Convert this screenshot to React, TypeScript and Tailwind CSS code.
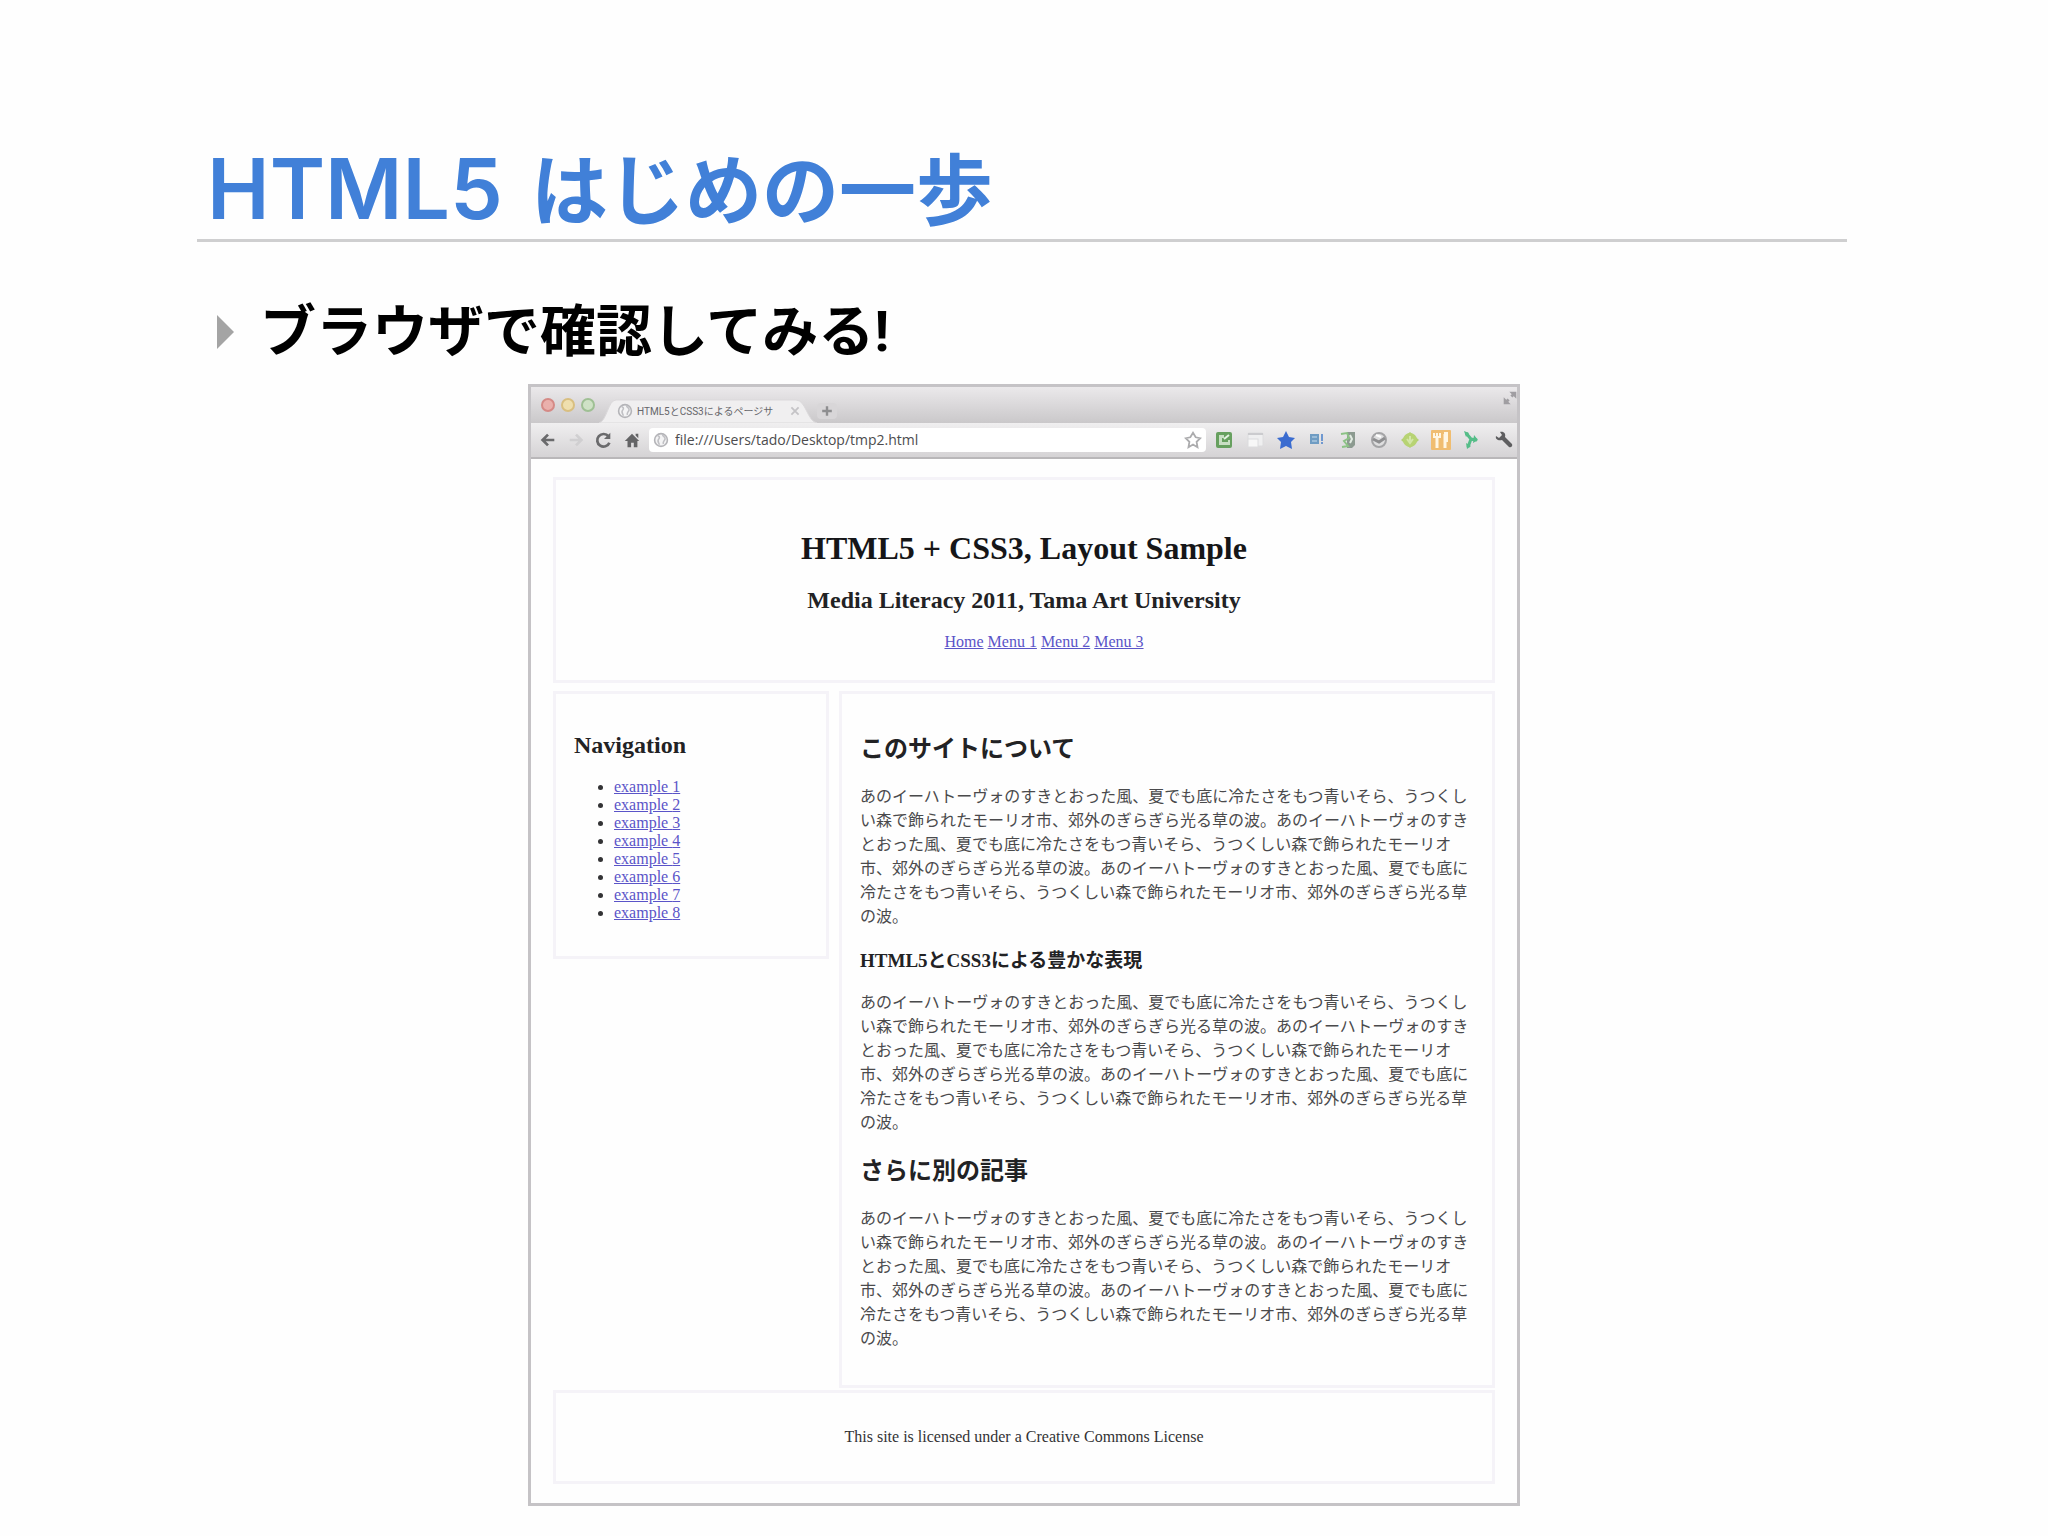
import type { ReactNode } from "react";

const STORY =
  "あのイーハトーヴォのすきとおった風、夏でも底に冷たさをもつ青いそら、うつくしい森で飾られたモーリオ市、郊外のぎらぎら光る草の波。";
const BODY_TEXT = STORY.repeat(3);

const MENU = ["Home", "Menu 1", "Menu 2", "Menu 3"];
const EXAMPLES = [1, 2, 3, 4, 5, 6, 7, 8];

function Icon({ children, size = 20 }: { children: ReactNode; size?: number }) {
  return (
    <svg width={size} height={size} viewBox="0 0 20 20" fill="none" aria-hidden="true" className="shrink-0">
      {children}
    </svg>
  );
}

function Globe() {
  return (
    <Icon size={16}>
      <circle cx="10" cy="10" r="8" fill="#f4f4f5" stroke="#b4b4b8" strokeWidth="2" />
      <path d="M5 4c3 1 4 3 2 5s0 4 1 7M12 3c0 3 4 3 3 6s-3 2-2 6" stroke="#c0c0c4" strokeWidth="2" />
    </Icon>
  );
}

const NAV_BUTTONS = [
  { label: "Back", icon: <path d="M17 10H4M10 4l-6 6 6 6" stroke="#6a6a6c" strokeWidth="3" /> },
  { label: "Forward", icon: <path d="M3 10h13M10 4l6 6-6 6" stroke="#d0cfd1" strokeWidth="3" /> },
  {
    label: "Reload",
    icon: (
      <>
        <path d="M15 6a7 7 0 1 0 1 7" stroke="#6a6a6c" strokeWidth="3" />
        <path d="M17 2v7h-7z" fill="#6a6a6c" />
      </>
    ),
  },
  {
    label: "Home",
    icon: <path d="M10 3l8 8h-2v7h-4v-5H9v5H5v-7H2zM14 3h3v5l-3-3z" fill="#646466" />,
  },
];

const EXTENSIONS = [
  {
    label: "Share",
    icon: (
      <>
        <rect x="2" y="2" width="16" height="16" rx="2" fill="#67a05f" />
        <path d="M5 5h5v3H8v4h6v-2h2v5H5z" fill="#c9dfc4" />
        <path d="M10 9l5-4" stroke="#e6f2e3" strokeWidth="2" />
      </>
    ),
  },
  {
    label: "Windows",
    icon: (
      <>
        <rect x="3" y="3" width="15" height="13" rx="1" fill="#efeff0" stroke="#dcdcde" />
        <path d="M3 4h15" stroke="#cbcbce" strokeWidth="2" />
        <rect x="3" y="9" width="10" height="8" fill="#f7f7f7" stroke="#dcdcde" />
      </>
    ),
  },
  {
    label: "Favorites",
    icon: <path d="M10 1l3 6 6 1-4 4 1 7-6-3-6 3 1-7-4-4 6-1z" fill="#3b6cd0" />,
  },
  {
    label: "Bookmark",
    icon: (
      <>
        <rect x="3" y="4" width="9" height="10" fill="#6f9cc3" />
        <path d="M5 7h5M5 11h5" stroke="#c8dcec" strokeWidth="1" />
        <path d="M15 4v7M15 12v2" stroke="#6f98d0" strokeWidth="2" />
      </>
    ),
  },
  {
    label: "Notes",
    icon: (
      <>
        <path d="M9 2h8v13l-3 3H9z" fill="#8c9a90" />
        <path d="M3 4l6-1 2 5-5 3 4 5-6 1" stroke="#8cc285" strokeWidth="2" />
        <path d="M12 5l2 4-2 4" stroke="#e2ebe2" strokeWidth="2" />
      </>
    ),
  },
  {
    label: "Block",
    icon: (
      <>
        <circle cx="10" cy="10" r="7" fill="#dededf" stroke="#a4a4a6" strokeWidth="2" />
        <path d="M4 9l6 3 6-4" stroke="#8e8e90" strokeWidth="3" />
        <path d="M7 5l5 2" stroke="#fff" strokeWidth="2" />
      </>
    ),
  },
  {
    label: "Feed",
    icon: (
      <>
        <path d="M10 2l9 8-9 8-9-8z" fill="#b3cf74" />
        <circle cx="10" cy="10" r="7" fill="#b7d373" />
        <path d="M10 6v5M7 9l3 4 3-4" stroke="#d3e6a8" strokeWidth="2" />
      </>
    ),
  },
  {
    label: "Tools",
    icon: (
      <>
        <rect x="0" y="0" width="20" height="20" rx="1" fill="#f0bd70" />
        <path d="M6 8v10M14 4v14" stroke="#fff6e2" strokeWidth="3" />
        <path d="M3 3v4h6V3M6 3v4M13 3h3v9" stroke="#fff6e2" strokeWidth="2" />
      </>
    ),
  },
  {
    label: "Branch",
    icon: (
      <>
        <path d="M4 3l5 6 6 1M9 9l-3 8" stroke="#55bd88" strokeWidth="3" />
        <path d="M2 1l5 2-3 4zM12 5l4 5-5 3zM4 13l5 3-4 3z" fill="#55bd88" />
      </>
    ),
  },
  {
    label: "Settings",
    icon: (
      <path
        d="M3 6l3 2 3-3-2-3c4-1 6 2 5 5l7 7c1 2-1 4-3 3l-7-7c-4 1-7-1-6-4z"
        fill="#5e5e60"
      />
    ),
  },
];

function TabStrip() {
  return (
    <div className="flex h-[36px] items-end bg-gradient-to-b from-[#ebe9eb] to-[#cac8ca] pl-[10px]">
      <div className="flex gap-[6px] self-center">
        <span className="h-[14px] w-[14px] rounded-full border-2 border-[#d58a86] bg-[#eab0ac]" />
        <span className="h-[14px] w-[14px] rounded-full border-2 border-[#d9bf80] bg-[#efdfae]" />
        <span className="h-[14px] w-[14px] rounded-full border-2 border-[#9fc094] bg-[#cfe2c6]" />
      </div>
      <div className="relative ml-1 h-[24px] w-[218px]">
        <svg viewBox="0 0 218 24" className="absolute inset-0 h-full w-full" aria-hidden="true">
          <path d="M0 24C8 22 9 1 17 1H197C207 1 208 22 218 24Z" fill="#f0eff0" stroke="#dbd9db" />
        </svg>
        <div className="relative flex h-full items-center gap-1 pl-[18px] pr-4 text-[#66666a]">
          <Globe />
          <span className="flex-1 whitespace-nowrap text-[10px]">HTML5とCSS3によるページサ</span>
          <button type="button" aria-label="Close tab" className="text-[#c4c3c6]">
            <Icon size={12}>
              <path d="M4 4l12 12M16 4L4 16" stroke="currentColor" strokeWidth="3" />
            </Icon>
          </button>
        </div>
      </div>
      <button type="button" aria-label="New tab" className="mb-1 flex h-4 w-5 items-center justify-center rounded bg-[#d8d6d8]">
        <Icon size={12}>
          <path d="M10 2v16M2 10h16" stroke="#8e8e90" strokeWidth="4" />
        </Icon>
      </button>
      <button type="button" aria-label="Full screen" className="ml-auto self-start py-1">
        <Icon size={14}>
          <path d="M9 1h10v10zM1 9v10h10z" fill="#a09ea2" />
          <path d="M12 8l4-4M4 16l4-4" stroke="#a09ea2" strokeWidth="4" />
        </Icon>
      </button>
    </div>
  );
}

function Toolbar() {
  return (
    <div className="flex h-[36px] items-center border-b-2 border-[#b9b7b9] bg-gradient-to-b from-[#f0eff0] to-[#d5d3d5] px-1">
      <div className="flex gap-[10px] pl-1">
        {NAV_BUTTONS.map((b) => (
          <button key={b.label} type="button" aria-label={b.label}>
            <Icon size={18}>{b.icon}</Icon>
          </button>
        ))}
      </div>
      <div className="mx-2 flex h-[24px] min-w-0 flex-1 items-center gap-[6px] rounded-sm bg-white px-1">
        <Globe />
        <input
          aria-label="Address"
          defaultValue="file:///Users/tado/Desktop/tmp2.html"
          className="min-w-0 flex-1 bg-transparent font-['Open_Sans',sans-serif] text-sm text-[#4c4c4e] outline-none"
        />
        <button type="button" aria-label="Bookmark this page">
          <Icon size={18}>
            <path d="M10 2l3 5 5 1-4 4 1 6-5-3-5 3 1-6-4-4 5-1z" stroke="#acacae" strokeWidth="2" />
          </Icon>
        </button>
      </div>
      <div className="flex gap-[11px]">
        {EXTENSIONS.map((e) => (
          <button key={e.label} type="button" aria-label={e.label}>
            <Icon>{e.icon}</Icon>
          </button>
        ))}
      </div>
    </div>
  );
}

function SamplePage() {
  return (
    <div className="bg-[#fefefe] px-[22px] pb-[19px] pt-[18px] font-['Liberation_Serif','Noto_Sans_CJK_JP',serif] text-base text-[#333335]">
      <header className="border-3 border-[#f5f3f8] pb-7 pt-[46px] text-center">
        <h1 className="text-[32px] font-bold leading-[44px] text-[#161618]">HTML5 + CSS3, Layout Sample</h1>
        <h2 className="mt-[14px] text-2xl font-bold text-[#222224]">Media Literacy 2011, Tama Art University</h2>
        <nav className="mt-4 flex justify-center gap-1 pl-10 leading-[20px]">
          {MENU.map((m) => (
            <a key={m} href="#" className="text-[#5a54c8] underline">{m}</a>
          ))}
        </nav>
      </header>

      <div className="mt-[8px] flex items-start gap-[10px]">
        <aside className="w-[276px] shrink-0 border-3 border-[#f5f3f8] px-[18px] pb-[34px] pt-[35px]">
          <h2 className="text-2xl font-bold text-[#222224]">Navigation</h2>
          <ul className="mt-[17px] list-disc pl-[40px] leading-[18px]">
            {EXAMPLES.map((n) => (
              <li key={n}>
                <a href="#" className="text-[#5a54c8] underline">example {n}</a>
              </li>
            ))}
          </ul>
        </aside>
        <main className="min-w-0 flex-1 border-3 border-[#f5f3f8] px-[18px] pb-[34px] pt-[39px]">
          <article>
            <h2 className="text-2xl font-bold leading-[32px] text-[#222224]">このサイトについて</h2>
            <p className="mt-5 leading-[24px] text-[#4a4a4c]">{BODY_TEXT}</p>
            <h3 className="mt-[18px] text-[19px] font-bold leading-[28px] text-[#222224]">HTML5とCSS3による豊かな表現</h3>
            <p className="mt-4 leading-[24px] text-[#4a4a4c]">{BODY_TEXT}</p>
          </article>
          <article className="mt-5">
            <h2 className="text-2xl font-bold leading-[32px] text-[#222224]">さらに別の記事</h2>
            <p className="mt-5 leading-[24px] text-[#4a4a4c]">{BODY_TEXT}</p>
          </article>
        </main>
      </div>

      <footer className="mt-[2px] border-3 border-[#f5f3f8] py-[32px] text-center">
        This site is licensed under a Creative Commons License
      </footer>
    </div>
  );
}

export default function App() {
  return (
    <div className="min-h-screen bg-[#fefefe] px-[197px] pb-8 pt-[143px] font-['Roboto','Noto_Sans_CJK_JP',sans-serif]" lang="ja">
      <h1 className="mr-1 flex items-baseline gap-[28px] border-b-3 border-[#cfcfd0] pl-[10px] leading-[92px] text-[#4180d8]">
        <span className="font-['Inter',sans-serif] text-[84px] font-semibold">HTML5</span>
        <span className="text-[77px] font-bold">はじめの一歩</span>
      </h1>
      <ul className="mt-[50px] pl-[20px]">
        <li className="flex items-center gap-[26px] text-[56px] font-bold leading-[80px] text-black">
          <svg width="17" height="34" viewBox="0 0 17 34" aria-hidden="true">
            <path d="M0 0l17 17L0 34z" fill="#a4a4a4" />
          </svg>
          <span>ブラウザで確認してみる!</span>
        </li>
      </ul>
      <section className="mx-auto mt-3 max-w-[992px] border-3 border-[#c5c3c6]">
        <TabStrip />
        <Toolbar />
        <SamplePage />
      </section>
    </div>
  );
}
